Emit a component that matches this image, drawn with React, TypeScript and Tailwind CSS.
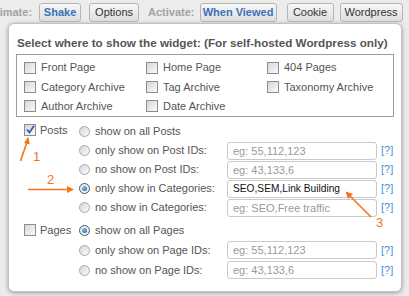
import React from "react";

const Check = ({ checked = false }: { checked?: boolean }) => (
  <span className="relative inline-block w-[12px] h-[12px] shrink-0 border border-[#8c8c8c] bg-linear-to-br from-[#d6d6d6] to-[#fbfbfb]">
    {checked && (
      <svg className="absolute left-[1px] top-[0px]" width="9" height="9" viewBox="0 0 9 9">
        <path d="M1 4.5 L3.5 7.5 L8 0.8" fill="none" stroke="#2c5fae" strokeWidth="1.8" />
      </svg>
    )}
  </span>
);

const Radio = ({ on = false }: { on?: boolean }) => (
  <span
    className={
      "relative inline-flex items-center justify-center w-[11px] h-[11px] shrink-0 rounded-full border " +
      (on ? "border-[#555] bg-[#eee]" : "border-[#a8a8a8] bg-linear-to-br from-[#d6d6d6] to-[#fcfcfc]")
    }
  >
    {on && <span className="w-[5px] h-[5px] rounded-full bg-[radial-gradient(circle_at_40%_35%,#7cc8ff,#0b5aa6)]" />}
  </span>
);

const Btn = ({ children, w, blue = false, ml }: { children: React.ReactNode; w: string; blue?: boolean; ml: string }) => (
  <div
    className={`${w} ${ml} h-[19px] flex items-center justify-center rounded-[3px] border border-[#b4b4b4] bg-linear-to-b from-[#f7f7f7] to-[#dedede] text-[11px] ${
      blue ? "font-bold text-[#3b71b6]" : "text-[#333]"
    }`}
  >
    {children}
  </div>
);

const Field = ({ ph, value }: { ph?: string; value?: string }) => (
  <input
    readOnly
    placeholder={ph}
    defaultValue={value}
    className={`w-[150px] h-[18px] rounded-[3px] border border-[#c9c9c9] bg-white pl-[5px] outline-none placeholder:text-[#9a9a9a] ${
      value ? "text-[10.2px] text-[#111]" : "text-[11px]"
    }`}
  />
);

const Help = () => <span className="ml-[4px] text-[11px] text-[#4a8fd3]">[?]</span>;

const Row = ({ on, label, ph, value, h }: { on?: boolean; label: string; ph?: string; value?: string; h: string }) => (
  <div className={`${h} flex items-center`}>
    <Radio on={on} />
    <span className="ml-[5px] w-[132px] text-[11px] text-[#555] whitespace-nowrap">{label}</span>
    {(ph || value) && (
      <>
        <Field ph={ph} value={value} />
        <Help />
      </>
    )}
  </div>
);

const CB = ({ label }: { label: string }) => (
  <div className="h-[19px] flex items-center">
    <Check />
    <span className="ml-[5px] text-[11px] text-[#555] whitespace-nowrap">{label}</span>
  </div>
);

export default function App() {
  const orange = "#f5731c";
  return (
    <div className="relative w-[409px] h-[296px] overflow-hidden bg-[#ececec] font-['Liberation_Sans',Arial,sans-serif]">
      {/* top bar */}
      <div className="h-[23px] flex items-start pt-[3px] whitespace-nowrap">
        <span className="ml-[-15px] h-[19px] flex items-center text-[11px] font-bold text-[#a3a3a3]">Animate:</span>
        <Btn w="w-[42px]" ml="ml-[7px]" blue>
          Shake
        </Btn>
        <Btn w="w-[50px]" ml="ml-[8px]">
          Options
        </Btn>
        <span className="ml-[9px] h-[19px] flex items-center text-[11px] font-bold text-[#a3a3a3]">Activate:</span>
        <Btn w="w-[77px]" ml="ml-[5px]" blue>
          When Viewed
        </Btn>
        <Btn w="w-[47px]" ml="ml-[10px]">
          Cookie
        </Btn>
        <Btn w="w-[63px]" ml="ml-[6px]">
          Wordpress
        </Btn>
      </div>

      {/* panel */}
      <div className="ml-[8px] w-[394px] h-[269px] rounded-[6px] border border-[#c2c2c2] bg-white shadow-[0_1px_4px_rgba(0,0,0,0.35)] pl-[7px] pt-[12px]">
        <div className="ml-[1px] h-[14px] flex items-center text-[11.7px] font-bold text-[#555] whitespace-nowrap">
          Select where to show the widget: (For self-hosted Wordpress only)
        </div>
        <div className="mt-[4px] w-[378px] h-[63px] border border-[#9c9c9c] pl-[7px] pt-[3px] grid grid-cols-[122px_121px_1fr]">
          <CB label="Front Page" />
          <CB label="Home Page" />
          <CB label="404 Pages" />
          <CB label="Category Archive" />
          <CB label="Tag Archive" />
          <CB label="Taxonomy Archive" />
          <CB label="Author Archive" />
          <CB label="Date Archive" />
        </div>

        {/* posts */}
        <div className="mt-[5px] flex">
          <div className="w-[63px] pl-[8px] pt-[2px]">
            <div className="h-[12px] flex items-center">
              <Check checked />
              <span className="ml-[4px] text-[11px] text-[#555]">Posts</span>
            </div>
          </div>
          <div className="flex flex-col">
            <Row h="h-[19px]" label="show on all Posts" />
            <Row h="h-[19px]" label="only show on Post IDs:" ph="eg: 55,112,123" />
            <Row h="h-[19px]" label="no show on Post IDs:" ph="eg: 43,133,6" />
            <Row h="h-[19px]" on label="only show in Categories:" value="SEO,SEM,Link Building" />
            <Row h="h-[19px]" label="no show in Categories:" ph="eg: SEO,Free traffic" />
          </div>
        </div>

        {/* pages */}
        <div className="mt-[3px] flex">
          <div className="w-[63px] pl-[8px] pt-[4px]">
            <div className="h-[12px] flex items-center">
              <Check />
              <span className="ml-[4px] text-[11px] text-[#555]">Pages</span>
            </div>
          </div>
          <div className="flex flex-col">
            <Row h="h-[20px]" on label="show on all Pages" />
            <Row h="h-[20px]" label="only show on Page IDs:" ph="eg: 55,112,123" />
            <Row h="h-[20px]" label="no show on Page IDs:" ph="eg: 43,133,6" />
          </div>
        </div>
      </div>

      {/* annotations */}
      <svg className="absolute inset-0 pointer-events-none" width="409" height="296" viewBox="0 0 409 296">
        <line x1="20.5" y1="161" x2="27" y2="142" stroke={orange} strokeWidth="1.6" />
        <polygon points="28.3,136.5 24,143 29.8,144.5" fill={orange} />
        <line x1="28" y1="189.5" x2="68" y2="189.5" stroke={orange} strokeWidth="1.6" />
        <polygon points="74,189.5 67,186 67,193" fill={orange} />
        <line x1="371" y1="217" x2="350" y2="196" stroke={orange} strokeWidth="1.6" />
        <polygon points="345.5,191.5 348,199 353,194" fill={orange} />
      </svg>
      <span className="absolute left-[33px] top-[149px] text-[13px] leading-[16px] text-[#f5731c]">1</span>
      <span className="absolute left-[47px] top-[172px] text-[13px] leading-[16px] text-[#f5731c]">2</span>
      <span className="absolute left-[376px] top-[215px] text-[13px] leading-[16px] text-[#f5731c]">3</span>
    </div>
  );
}
